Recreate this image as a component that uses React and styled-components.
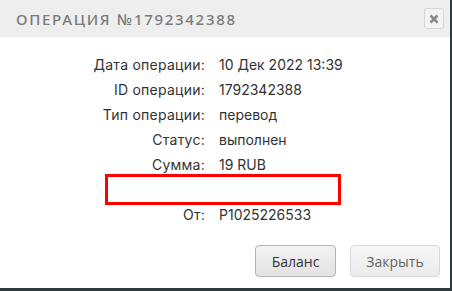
import React from "react";
import styled, { createGlobalStyle } from "styled-components";

const GlobalStyle = createGlobalStyle`
  html, body {
    margin: 0;
    padding: 0;
    background: #2e3a40;
  }
`;

const rows = [
  ["Дата операции:", "10 Дек 2022 13:39"],
  ["ID операции:", "1792342388"],
  ["Тип операции:", "перевод"],
  ["Статус:", "выполнен"],
  ["Сумма:", "19 RUB"],
];

function App() {
  return (
    <>
      <GlobalStyle />
      <Dialog>
        <Header>
          <Title>ОПЕРАЦИЯ №1792342388</Title>
          <CloseBtn>
            <svg width="10" height="10" viewBox="0 0 10 10">
              <path d="M1.5 1.5 L8.5 8.5 M8.5 1.5 L1.5 8.5" stroke="#888" strokeWidth="2.6" />
            </svg>
          </CloseBtn>
        </Header>
        <Body>
          <Grid>
            {rows.map(([label, value]) => (
              <React.Fragment key={label}>
                <Label>{label}</Label>
                <Value>{value}</Value>
              </React.Fragment>
            ))}
          </Grid>
          <Redact />
          <Grid>
            <Label>От:</Label>
            <Value>P1025226533</Value>
          </Grid>
        </Body>
        <Footer>
          <Button>Баланс</Button>
          <Button disabled>Закрыть</Button>
        </Footer>
      </Dialog>
    </>
  );
}

export default App;

const Dialog = styled.div`
  width: 450px;
  height: 288px;
  background: #fff;
  display: flex;
  flex-direction: column;
`;

const Header = styled.div`
  height: 37px;
  background: #eeeeee;
  display: flex;
  align-items: center;
  justify-content: space-between;
  padding: 0 6px 0 16px;
  box-sizing: border-box;
`;

const Title = styled.div`
  font-family: "Noto Sans", sans-serif;
  font-size: 15px;
  letter-spacing: 1.7px;
  color: #7a7a7a;
  font-weight: 500;
`;

const CloseBtn = styled.div`
  width: 18px;
  height: 19px;
  border: 1px solid #d6d6d6;
  border-radius: 3px;
  background: #f3f3f3;
  display: flex;
  align-items: center;
  justify-content: center;
`;

const Body = styled.div`
  flex: 1;
  padding-top: 19px;
  display: flex;
  flex-direction: column;
  align-items: flex-start;
`;

const Grid = styled.div`
  display: grid;
  grid-template-columns: 205px auto;
  column-gap: 14px;
  row-gap: 7px;
  font-family: Inter, sans-serif;
  font-size: 14px;
  color: #333;
  line-height: 18px;
`;

const Label = styled.div`
  text-align: right;
  letter-spacing: 0.25px;
`;

const Value = styled.div``;

const Redact = styled.div`
  margin: 0 0 0 105px;
  width: 236px;
  height: 31px;
  border: 3px solid #f00;
  box-sizing: border-box;
  margin-bottom: 1px;
`;

const Footer = styled.div`
  display: flex;
  justify-content: flex-end;
  gap: 14px;
  padding: 0 10px 11px 0;
`;

const Button = styled.button`
  height: 32px;
  padding: 0 ${(p) => (p.disabled ? "13px" : "14px")};
  min-width: ${(p) => (p.disabled ? "90px" : "81px")};
  font-family: "Open Sans", sans-serif;
  font-size: 14px;
  color: ${(p) => (p.disabled ? "#666" : "#333")};
  border: 1px solid ${(p) => (p.disabled ? "#d8d8d8" : "#b4b4b4")};
  border-radius: 4px;
  background: ${(p) => (p.disabled ? "linear-gradient(#f6f6f6, #ebebeb)" : "linear-gradient(#f3f3f3, #e2e2e2)")};
`;
